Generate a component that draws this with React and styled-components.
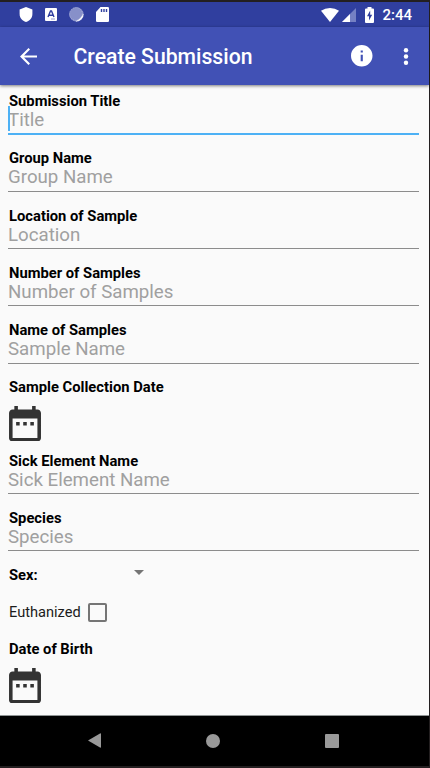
import React from "react";
import styled, { createGlobalStyle } from "styled-components";

const GlobalStyle = createGlobalStyle`
  *, *::before, *::after { box-sizing: border-box; }
  body { margin: 0; background: #231f20; font-family: Roboto, "Noto Sans", sans-serif; }
`;

const Device = styled.div`
  width: 430px;
  height: 768px;
  padding: 2px 1px 2px 0;
  background: #231f20;
  display: flex;
  flex-direction: column;
  overflow: hidden;
`;

const StatusBar = styled.div`
  height: 25px;
  flex: none;
  display: flex;
  align-items: center;
  justify-content: space-between;
  padding: 0 17px 0 19px;
  background: #303f9f;
  color: #fff;
`;

const StatusGroup = styled.div`
  display: flex;
  align-items: center;
  gap: ${(p) => p.$gap}px;
  svg { display: block; flex: none; }
`;

const Clock = styled.span`
  font-size: 15px;
  line-height: 24px;
  font-weight: 500;
  margin-left: 5px;
  padding-top: 1px;
`;

const AppBar = styled.header`
  height: 58px;
  flex: none;
  display: flex;
  align-items: center;
  padding: 0 20px 0 19.5px;
  background: #4151b5;
  color: #fff;
  box-shadow: 0 1px 3px rgba(0, 0, 0, 0.5);
  z-index: 1;
  svg { display: block; flex: none; }
`;

const Title = styled.h1`
  flex: 1;
  margin: 0 0 0 37px;
  padding-top: 1px;
  font-size: 21.2px;
  line-height: 28px;
  font-weight: 500;
`;

const MoreIcon = styled.svg`
  margin-left: 30.5px;
`;

const Form = styled.main`
  flex: 1;
  min-height: 0;
  padding: 8px 10px 0 8px;
  background: #fafafa;
  overflow: hidden;
`;

const Field = styled.div`
  height: 57.3px;
`;

const Label = styled.div`
  padding-left: 1px;
  font-size: 14.75px;
  line-height: 17px;
  font-weight: 700;
  color: #000;
`;

const Entry = styled.div`
  height: ${(p) => (p.$focused ? 25 : 24.5)}px;
  border-bottom: ${(p) => (p.$focused ? "2px solid #4db1f5" : "1px solid #8c8c8c")};
  font-size: 18.7px;
  line-height: 20px;
  color: #a0a0a0;
  position: relative;
`;

const Caret = styled.span`
  position: absolute;
  left: 0;
  top: -4px;
  width: 1.5px;
  height: 25px;
  background: #4db1f5;
`;

const DateField = styled.div`
  height: 73.2px;
`;

const Calendar = styled.svg`
  display: block;
  margin: 9.3px 0 0 1px;
`;

const SexRow = styled.div`
  height: 35px;
  display: flex;
  align-items: flex-start;
`;

const Arrow = styled.svg`
  margin: 3.2px 0 0 96.5px;
`;

const CheckRow = styled.label`
  display: flex;
  align-items: center;
  height: 20px;
  margin-bottom: 19px;
  padding-left: 1px;
  font-size: 14.6px;
  color: #1c1c1c;
`;

const Box = styled.span`
  width: 19px;
  height: 19px;
  margin-left: 7px;
  border: 2px solid #757575;
  border-radius: 2px;
`;

const NavBar = styled.nav`
  height: 51px;
  flex: none;
  display: flex;
  align-items: center;
  padding: 0 0 1px 88px;
  gap: 105px;
  background: #000;
  border-top: 1px solid #8f9494;
`;

const DateIcon = () => (
  <Calendar width="32" height="35.5" viewBox="3 2 18 20" fill="#333">
    <path d="M9 11H7v2h2v-2zm4 0h-2v2h2v-2zm4 0h-2v2h2v-2zm2-7h-1V2h-2v2H8V2H6v2H5c-1.11 0-1.99.9-1.99 2L3 20c0 1.1.89 2 2 2h14c1.1 0 2-.9 2-2V6c0-1.1-.9-2-2-2zm0 16H5V9h14v11z" />
  </Calendar>
);

const TextField = ({ label, hint, focused }) => (
  <Field>
    <Label>{label}</Label>
    <Entry $focused={focused}>
      {focused && <Caret />}
      {hint}
    </Entry>
  </Field>
);

export default function App() {
  return (
    <>
      <GlobalStyle />
      <Device>
        <StatusBar>
          <StatusGroup $gap={12}>
            <svg width="14" height="15" viewBox="0 0 14 15" fill="#fff">
              <path d="M7 0 13.4 2.5V7c0 3.8-2.6 6.8-6.4 8C3.2 13.8.6 10.8.6 7V2.5z" />
            </svg>
            <svg width="12" height="13" viewBox="0 0 12 13">
              <rect width="12" height="13" rx="1" fill="#fff" />
              <path d="M3 9 5.5 3h1L9 9M4 7.2h4" fill="none" stroke="#303f9f" strokeWidth="1.4" />
              <path d="M6.5 11h1M8.500 11h1" stroke="#303f9f" />
            </svg>
            <svg width="15" height="15" viewBox="0 0 15 15">
              <circle cx="7.5" cy="7.5" r="7.2" fill="#8790c9" />
              <circle cx="7" cy="7" r="6.4" fill="none" stroke="#a8afdb" strokeDasharray="1 1" />
              <path d="M14.3 7A7 7 0 0 1 7 14.300Q12 12 14.300 7" fill="#fff" stroke="#fff" strokeWidth=".3" />
            </svg>
            <svg width="13" height="15" viewBox="0 0 13 15">
              <path d="M4.5 0H11.7Q13 0 13 1.3V13.7Q13 15 11.7 15H1.3Q0 15 0 13.7V5z" fill="#fff" />
              <path d="M5.5 2v3M8 2v3M10.5 2v3" stroke="#303f9f" strokeWidth="1.4" />
            </svg>
          </StatusGroup>
          <StatusGroup $gap={3}>
            <svg width="18" height="14" viewBox="0 0 18 14" fill="#fff">
              <path d="M9 14 0 2.8Q4 0 9 0t9 2.8z" />
            </svg>
            <svg width="14" height="14" viewBox="0 0 14 14">
              <path d="M0 14 14 0V14z" fill="#7580c3" />
              <path d="M0 14 8 6V14z" fill="#fff" />
            </svg>
            <svg width="15" height="16" viewBox="-6 0 15 16">
              <path d="M2.5 1.5V0h4v1.5H8Q9 1.5 9 2.5V15Q9 16 8 16H1Q0 16 0 15V2.5Q0 1.5 1 1.5z" fill="#fff" />
              <path d="M5.2 3.500 2 9.300h2V13.500L7.200 7.700h-2z" fill="#303f9f" />
            </svg>
            <Clock>2:44</Clock>
          </StatusGroup>
        </StatusBar>

        <AppBar>
          <svg width="17" height="17" viewBox="4 4 16 16" fill="#fff">
            <path d="M20 11H7.830l5.590-5.590L12 4l-8 8 8 8 1.410-1.410L7.830 13H20v-2z" />
          </svg>
          <Title>Create Submission</Title>
          <svg width="21.5" height="21.5" viewBox="2 2 20 20" fill="#fff">
            <path d="M12 2C6.480 2 2 6.480 2 12s4.480 10 10 10 10-4.480 10-10S17.520 2 12 2zm1 15h-2v-6h2v6zm0-8h-2V7h2v2z" />
          </svg>
          <MoreIcon width="6" height="17" viewBox="0 0 6 17" fill="#fff">
            <circle cx="3" cy="2.3" r="2.2" />
            <circle cx="3" cy="8.5" r="2.2" />
            <circle cx="3" cy="14.7" r="2.2" />
          </MoreIcon>
        </AppBar>

        <Form>
          <TextField label="Submission Title" hint="Title" focused />
          <TextField label="Group Name" hint="Group Name" />
          <TextField label="Location of Sample" hint="Location" />
          <TextField label="Number of Samples" hint="Number of Samples" />
          <TextField label="Name of Samples" hint="Sample Name" />
          <DateField>
            <Label>Sample Collection Date</Label>
            <DateIcon />
          </DateField>
          <TextField label="Sick Element Name" hint="Sick Element Name" />
          <TextField label="Species" hint="Species" />
          <SexRow>
            <Label>Sex:</Label>
            <Arrow width="10" height="5" viewBox="0 0 10 5" fill="#757575">
              <path d="M0 0h10L5 5z" />
            </Arrow>
          </SexRow>
          <CheckRow>
            Euthanized
            <Box />
          </CheckRow>
          <DateField>
            <Label>Date of Birth</Label>
            <DateIcon />
          </DateField>
        </Form>

        <NavBar>
          <svg width="13" height="15" viewBox="0 0 13 15" fill="#999">
            <path d="M0 7.5 12 .5Q13 0 13 1V14Q13 15 12 14.5z" />
          </svg>
          <svg width="14" height="14" viewBox="0 0 14 14" fill="#999">
            <circle cx="7" cy="7" r="7" />
          </svg>
          <svg width="14" height="14" viewBox="0 0 14 14" fill="#999">
            <rect width="14" height="14" rx="1" />
          </svg>
        </NavBar>
      </Device>
    </>
  );
}
